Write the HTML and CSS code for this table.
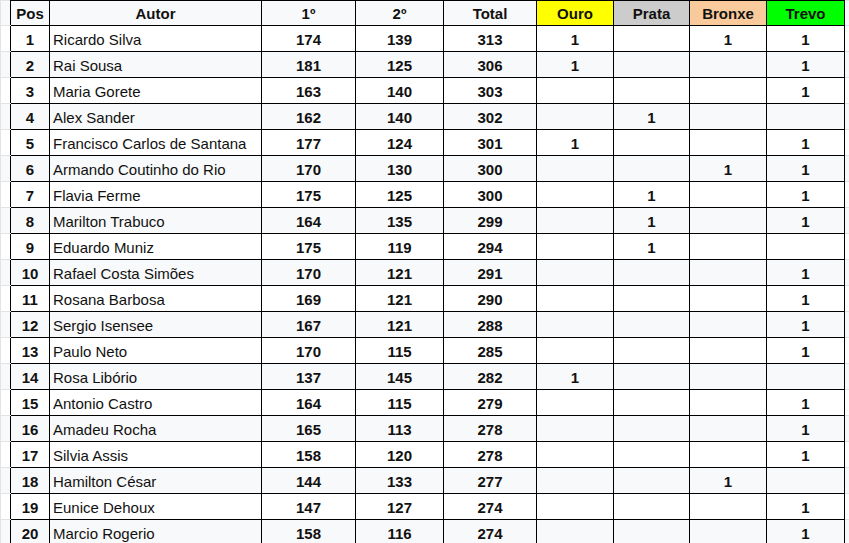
FILE: index.html
```html
<!DOCTYPE html>
<html lang="pt">
<head>
<meta charset="utf-8">
<title>Classificação</title>
<link rel="stylesheet" href="styles.css">
</head>
<body>
<table class="sheet">
  <colgroup>
    <col class="c-gut">
    <col class="c-pos">
    <col class="c-name">
    <col class="c-r1">
    <col class="c-r2">
    <col class="c-tot">
    <col class="c-med">
    <col class="c-med2">
    <col class="c-med">
    <col class="c-med3">
    <col class="c-gutr">
  </colgroup>
  <tr class="head">
    <td class="gut"></td>
    <td>Pos</td><td>Autor</td><td>1º</td><td>2º</td><td>Total</td>
    <td class="ouro">Ouro</td><td class="prata">Prata</td><td class="bronze">Bronxe</td><td class="trevo">Trevo</td>
    <td class="gutr"></td>
  </tr>
  <tr><td class="gut"></td><td class="num">1</td><td class="name">Ricardo Silva</td><td class="num">174</td><td class="num">139</td><td class="num">313</td><td class="num">1</td><td class="num"></td><td class="num">1</td><td class="num">1</td><td class="gutr"></td></tr>
  <tr><td class="gut"></td><td class="num">2</td><td class="name">Rai Sousa</td><td class="num">181</td><td class="num">125</td><td class="num">306</td><td class="num">1</td><td class="num"></td><td class="num"></td><td class="num">1</td><td class="gutr"></td></tr>
  <tr><td class="gut"></td><td class="num">3</td><td class="name">Maria Gorete</td><td class="num">163</td><td class="num">140</td><td class="num">303</td><td class="num"></td><td class="num"></td><td class="num"></td><td class="num">1</td><td class="gutr"></td></tr>
  <tr><td class="gut"></td><td class="num">4</td><td class="name">Alex Sander</td><td class="num">162</td><td class="num">140</td><td class="num">302</td><td class="num"></td><td class="num">1</td><td class="num"></td><td class="num"></td><td class="gutr"></td></tr>
  <tr><td class="gut"></td><td class="num">5</td><td class="name">Francisco Carlos de Santana</td><td class="num">177</td><td class="num">124</td><td class="num">301</td><td class="num">1</td><td class="num"></td><td class="num"></td><td class="num">1</td><td class="gutr"></td></tr>
  <tr><td class="gut"></td><td class="num">6</td><td class="name">Armando Coutinho do Rio</td><td class="num">170</td><td class="num">130</td><td class="num">300</td><td class="num"></td><td class="num"></td><td class="num">1</td><td class="num">1</td><td class="gutr"></td></tr>
  <tr><td class="gut"></td><td class="num">7</td><td class="name">Flavia Ferme</td><td class="num">175</td><td class="num">125</td><td class="num">300</td><td class="num"></td><td class="num">1</td><td class="num"></td><td class="num">1</td><td class="gutr"></td></tr>
  <tr><td class="gut"></td><td class="num">8</td><td class="name">Marilton Trabuco</td><td class="num">164</td><td class="num">135</td><td class="num">299</td><td class="num"></td><td class="num">1</td><td class="num"></td><td class="num">1</td><td class="gutr"></td></tr>
  <tr><td class="gut"></td><td class="num">9</td><td class="name">Eduardo Muniz</td><td class="num">175</td><td class="num">119</td><td class="num">294</td><td class="num"></td><td class="num">1</td><td class="num"></td><td class="num"></td><td class="gutr"></td></tr>
  <tr><td class="gut"></td><td class="num">10</td><td class="name">Rafael Costa Simões</td><td class="num">170</td><td class="num">121</td><td class="num">291</td><td class="num"></td><td class="num"></td><td class="num"></td><td class="num">1</td><td class="gutr"></td></tr>
  <tr><td class="gut"></td><td class="num">11</td><td class="name">Rosana Barbosa</td><td class="num">169</td><td class="num">121</td><td class="num">290</td><td class="num"></td><td class="num"></td><td class="num"></td><td class="num">1</td><td class="gutr"></td></tr>
  <tr><td class="gut"></td><td class="num">12</td><td class="name">Sergio Isensee</td><td class="num">167</td><td class="num">121</td><td class="num">288</td><td class="num"></td><td class="num"></td><td class="num"></td><td class="num">1</td><td class="gutr"></td></tr>
  <tr><td class="gut"></td><td class="num">13</td><td class="name">Paulo Neto</td><td class="num">170</td><td class="num">115</td><td class="num">285</td><td class="num"></td><td class="num"></td><td class="num"></td><td class="num">1</td><td class="gutr"></td></tr>
  <tr><td class="gut"></td><td class="num">14</td><td class="name">Rosa Libório</td><td class="num">137</td><td class="num">145</td><td class="num">282</td><td class="num">1</td><td class="num"></td><td class="num"></td><td class="num"></td><td class="gutr"></td></tr>
  <tr><td class="gut"></td><td class="num">15</td><td class="name">Antonio Castro</td><td class="num">164</td><td class="num">115</td><td class="num">279</td><td class="num"></td><td class="num"></td><td class="num"></td><td class="num">1</td><td class="gutr"></td></tr>
  <tr><td class="gut"></td><td class="num">16</td><td class="name">Amadeu Rocha</td><td class="num">165</td><td class="num">113</td><td class="num">278</td><td class="num"></td><td class="num"></td><td class="num"></td><td class="num">1</td><td class="gutr"></td></tr>
  <tr><td class="gut"></td><td class="num">17</td><td class="name">Silvia Assis</td><td class="num">158</td><td class="num">120</td><td class="num">278</td><td class="num"></td><td class="num"></td><td class="num"></td><td class="num">1</td><td class="gutr"></td></tr>
  <tr><td class="gut"></td><td class="num">18</td><td class="name">Hamilton César</td><td class="num">144</td><td class="num">133</td><td class="num">277</td><td class="num"></td><td class="num"></td><td class="num">1</td><td class="num"></td><td class="gutr"></td></tr>
  <tr><td class="gut"></td><td class="num">19</td><td class="name">Eunice Dehoux</td><td class="num">147</td><td class="num">127</td><td class="num">274</td><td class="num"></td><td class="num"></td><td class="num"></td><td class="num">1</td><td class="gutr"></td></tr>
  <tr><td class="gut"></td><td class="num">20</td><td class="name">Marcio Rogerio</td><td class="num">158</td><td class="num">116</td><td class="num">274</td><td class="num"></td><td class="num"></td><td class="num"></td><td class="num">1</td><td class="gutr"></td></tr>
</table>
</body>
</html>
```
FILE: styles.css
```css
html, body {
  margin: 0;
  padding: 0;
  overflow: hidden;
  background: #ffffff;
}

.sheet {
  border-collapse: collapse;
  table-layout: fixed;
  width: 849px;
  font-family: Arial, "Liberation Sans", sans-serif;
  font-size: 15px;
  color: #111111;
}

.c-gut { width: 10px; }
.c-pos { width: 39px; }
.c-name { width: 212px; }
.c-r1 { width: 94px; }
.c-r2 { width: 88px; }
.c-tot { width: 93px; }
.c-med { width: 77px; }
.c-med2 { width: 76px; }
.c-med3 { width: 78px; }
.c-gutr { width: 5px; }

.sheet td {
  border: 1px solid #000000;
  height: 22px;
  padding: 0 3px 3px 3px;
  line-height: 17px;
  vertical-align: bottom;
  white-space: nowrap;
  overflow: hidden;
  text-align: center;
  font-weight: bold;
}

.sheet tr:nth-child(odd) td { background: #f8f9fa; }
.sheet tr:nth-child(even) td { background: #ffffff; }

.sheet .head td {
  height: 21px;
}

.sheet td.name {
  text-align: left;
  font-weight: normal;
}

.sheet td.gut,
.sheet td.gutr {
  background: #f8f9fa;
  border-top: 1px solid #e2e3e3;
  border-bottom: 1px solid #e2e3e3;
  border-left: 1px solid #e2e3e3;
  border-right: 1px solid #000000;
  padding: 0;
}

.sheet td.gutr {
  background: #ffffff;
  border-left: 1px solid #000000;
  border-right: 1px solid #e2e3e3;
}

.sheet .head td.ouro { background: #ffff00; }
.sheet .head td.prata { background: #cccccc; }
.sheet .head td.bronze { background: #f9cb9c; }
.sheet .head td.trevo { background: #00ff00; }
```
